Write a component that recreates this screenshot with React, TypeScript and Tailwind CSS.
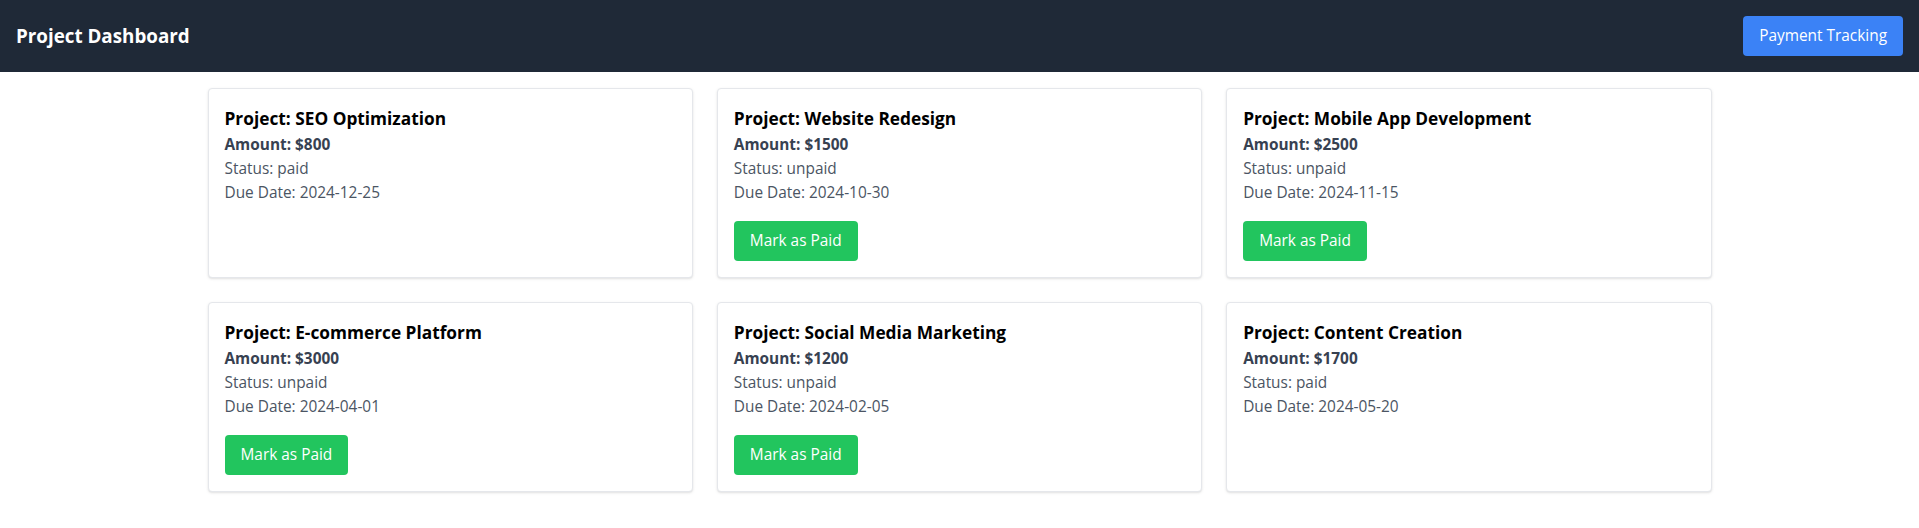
import { useState } from "react";

interface Project {
  id: number;
  name: string;
  amount: number;
  status: "paid" | "unpaid";
  dueDate: string;
}

const initialProjects: Project[] = [
  { id: 1, name: "SEO Optimization", amount: 800, status: "paid", dueDate: "2024-12-25" },
  { id: 2, name: "Website Redesign", amount: 1500, status: "unpaid", dueDate: "2024-10-30" },
  { id: 3, name: "Mobile App Development", amount: 2500, status: "unpaid", dueDate: "2024-11-15" },
  { id: 4, name: "E-commerce Platform", amount: 3000, status: "unpaid", dueDate: "2024-04-01" },
  { id: 5, name: "Social Media Marketing", amount: 1200, status: "unpaid", dueDate: "2024-02-05" },
  { id: 6, name: "Content Creation", amount: 1700, status: "paid", dueDate: "2024-05-20" },
];

const App = () => {
  const [projects, setProjects] = useState<Project[]>(initialProjects);

  // flip a project to paid
  const markAsPaid = (id: number) => {
    setProjects((prev) =>
      prev.map((p) => (p.id === id ? { ...p, status: "paid" } : p))
    );
  };

  return (
    <div className="min-h-screen bg-white font-['Open_Sans',sans-serif] text-[15.4px] leading-6">
      {/* header */}
      <nav className="bg-[#1f2937] h-[72px] px-4 flex items-center justify-between">
        <h1 className="text-white text-[18.8px] leading-7 font-bold">Project Dashboard</h1>
        <button className="bg-[#3b82f6] text-white px-4 py-2 rounded h-10">
          Payment Tracking
        </button>
      </nav>

      {/* project cards */}
      <div className="container mx-auto p-4">
        <div className="grid grid-cols-3 gap-6">
          {projects.map((project) => (
            <div
              key={project.id}
              className="bg-white border border-[#e5e7eb] rounded shadow p-4"
            >
              <h2 className="text-[17.3px] leading-7 font-bold text-black">
                Project: {project.name}
              </h2>
              <p className="font-bold text-[#374151]">Amount: ${project.amount}</p>
              <p className="text-[#4b5563]">Status: {project.status}</p>
              <p className="text-[#4b5563]">Due Date: {project.dueDate}</p>
              {project.status === "unpaid" && (
                <button
                  className="mt-4 bg-[#22c55e] text-white px-4 py-2 rounded h-10"
                  onClick={() => markAsPaid(project.id)}
                >
                  Mark as Paid
                </button>
              )}
            </div>
          ))}
        </div>
      </div>
    </div>
  );
};

export default App;
